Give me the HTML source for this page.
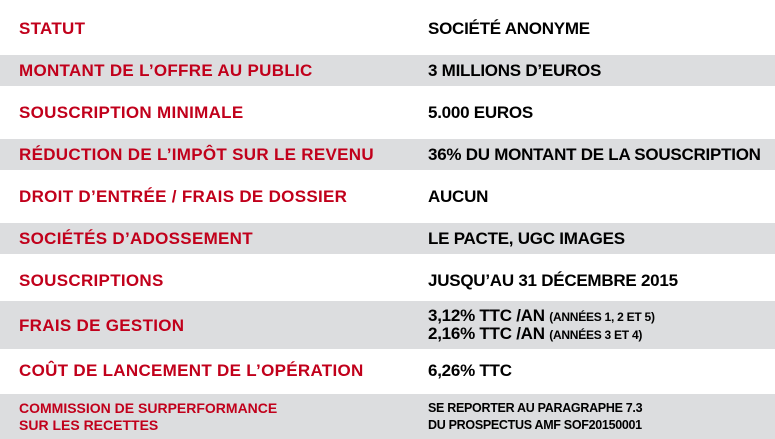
<!DOCTYPE html>
<html><head><meta charset="utf-8"><style>
body{margin:0;width:775px;height:439px;background:#fff;position:relative;overflow:hidden;font-family:"Liberation Sans",Arial,sans-serif;font-weight:bold;}
.g{position:absolute;left:0;width:775px;background:#dcdddf;}
.l,.r{position:absolute;font-size:17px;line-height:18px;white-space:nowrap}
.l{left:19px;color:#c1001b;letter-spacing:0.3px}
.r{left:428px;color:#000;letter-spacing:-0.25px}
.s{font-size:12px}
.l.sm{font-size:14px;line-height:17px;letter-spacing:0}
.r.sm{font-size:12.5px;line-height:17px;letter-spacing:-0.3px}
</style></head><body>
<div class="g" style="top:55px;height:31px"></div>
<div class="g" style="top:139px;height:31px"></div>
<div class="g" style="top:223px;height:31px"></div>
<div class="g" style="top:301px;height:48px"></div>
<div class="g" style="top:394px;height:45px"></div>

<div class="l" style="top:20px">STATUT</div><div class="r" style="top:20px">SOCIÉTÉ ANONYME</div>
<div class="l" style="top:62px">MONTANT DE L’OFFRE AU PUBLIC</div><div class="r" style="top:62px">3 MILLIONS D’EUROS</div>
<div class="l" style="top:104px">SOUSCRIPTION MINIMALE</div><div class="r" style="top:104px">5.000 EUROS</div>
<div class="l" style="top:146px">RÉDUCTION DE L’IMPÔT SUR LE REVENU</div><div class="r" style="top:146px">36% DU MONTANT DE LA SOUSCRIPTION</div>
<div class="l" style="top:188px">DROIT D’ENTRÉE / FRAIS DE DOSSIER</div><div class="r" style="top:188px">AUCUN</div>
<div class="l" style="top:230px">SOCIÉTÉS D’ADOSSEMENT</div><div class="r" style="top:230px">LE PACTE, UGC IMAGES</div>
<div class="l" style="top:272px">SOUSCRIPTIONS</div><div class="r" style="top:272px">JUSQU’AU 31 DÉCEMBRE 2015</div>
<div class="l" style="top:317px">FRAIS DE GESTION</div>
<div class="r" style="top:307px">3,12% TTC /AN <span class="s">(ANNÉES 1, 2 ET 5)</span></div>
<div class="r" style="top:325px">2,16% TTC /AN <span class="s">(ANNÉES 3 ET 4)</span></div>
<div class="l" style="top:362px">COÛT DE LANCEMENT DE L’OPÉRATION</div><div class="r" style="top:362px">6,26% TTC</div>
<div class="l sm" style="top:400px">COMMISSION DE SURPERFORMANCE<br>SUR LES RECETTES</div>
<div class="r sm" style="top:400px">SE REPORTER AU PARAGRAPHE 7.3<br>DU PROSPECTUS AMF SOF20150001</div>
</body></html>
